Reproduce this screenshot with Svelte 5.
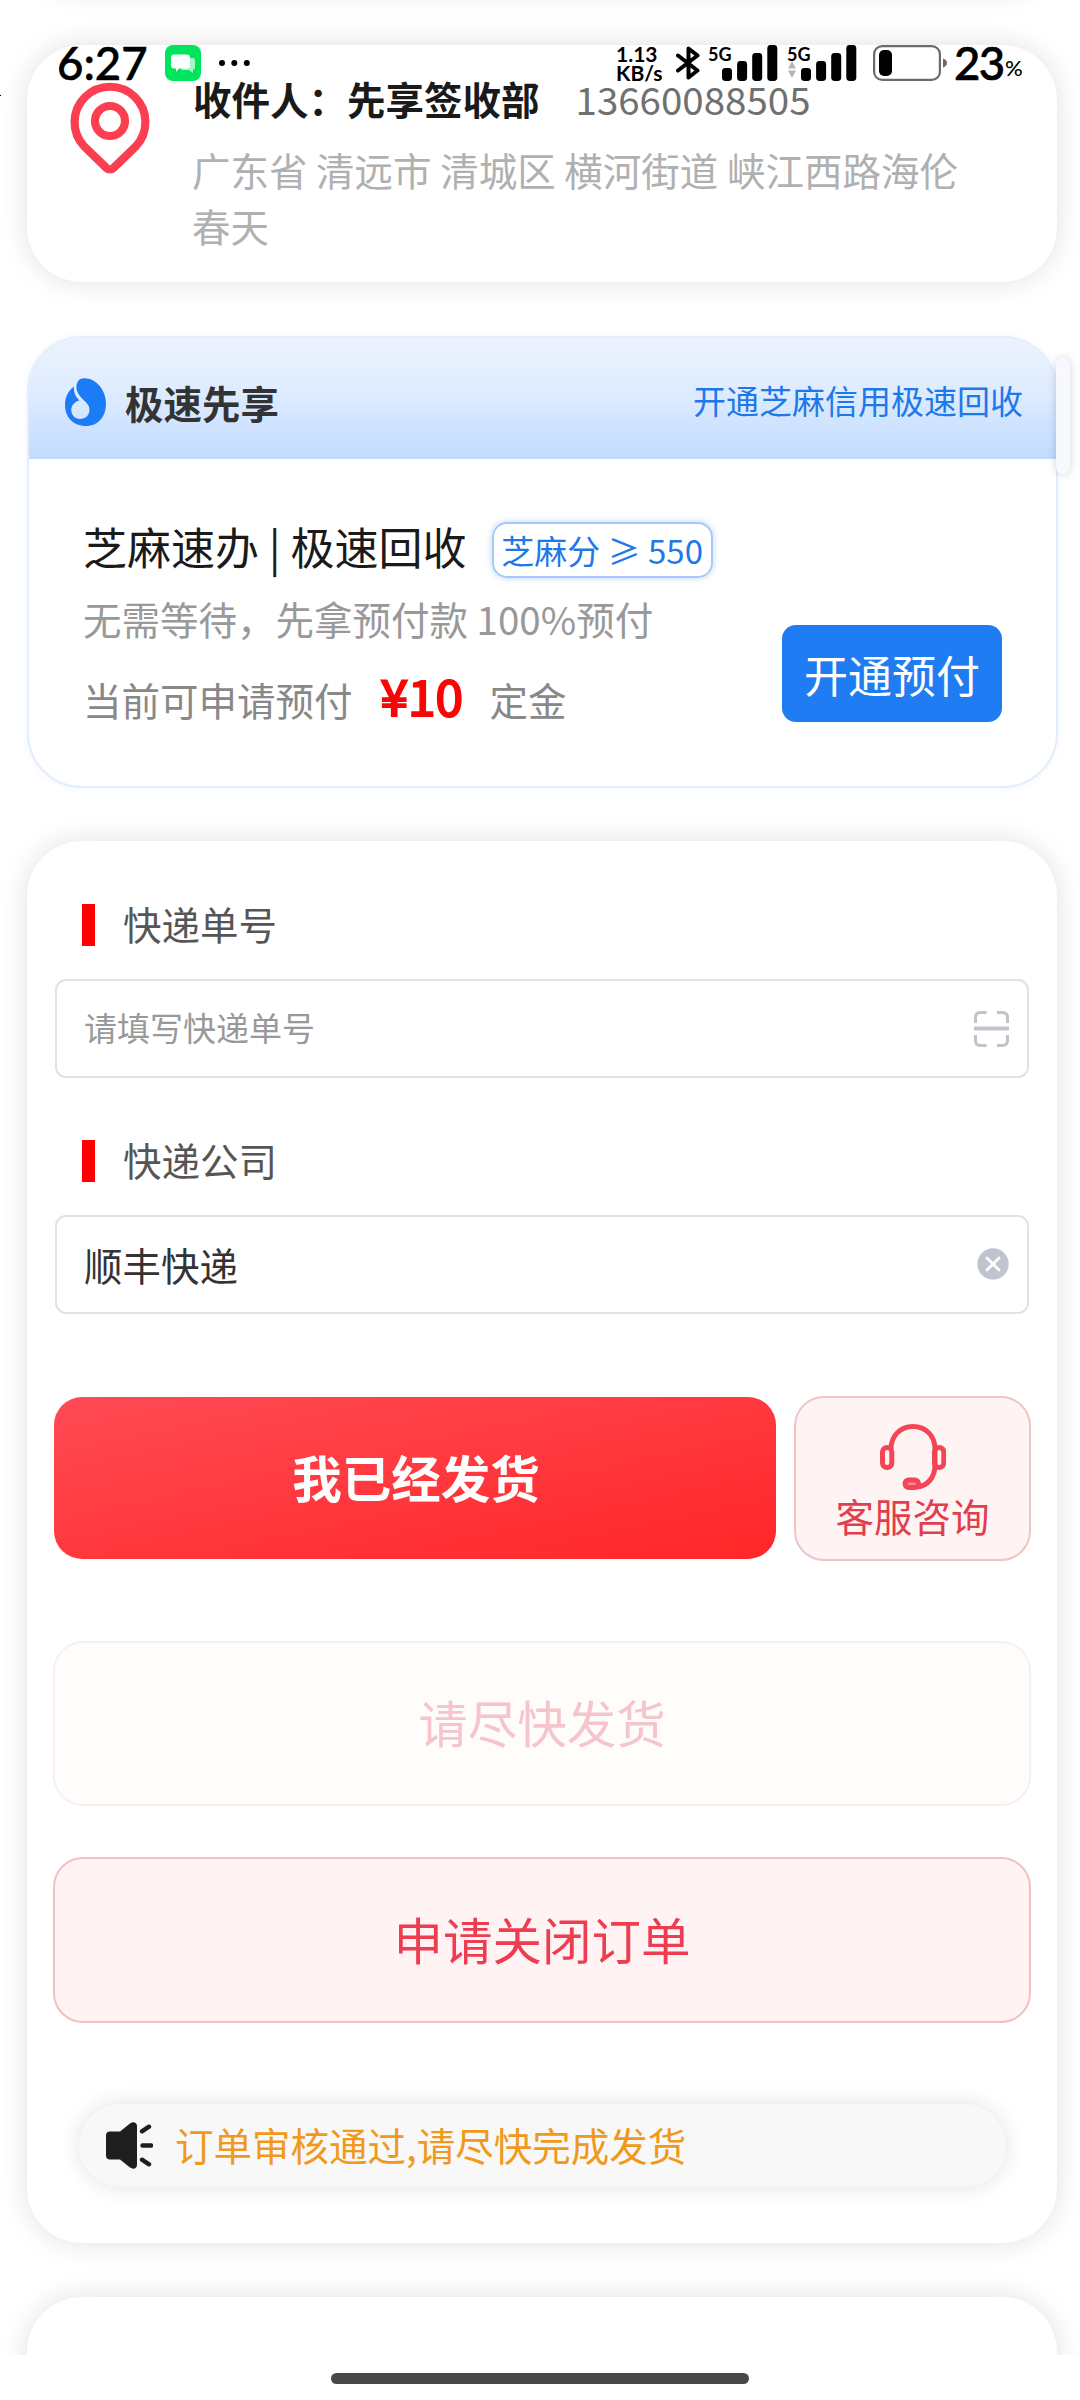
<script>
  const bars = [13, 20, 28, 36];
</script>

{#snippet signal()}
  <svg class="bars" width="56" height="36" viewBox="0 0 56 36">
    {#each bars as h, i}
      <rect x={i * 15.1} y={36 - h} width="10" height={h} rx="3.4" fill="#000" />
    {/each}
  </svg>
{/snippet}

<div class="screen">
  <main class="content">
    <section class="card previous"></section>

    <section class="card address">
      <svg class="pin" width="80" height="93" viewBox="0 0 80 93" fill="none" stroke="#fb3f51" stroke-width="8.2" stroke-linejoin="round">
        <path d="M14.3 65.5A35.4 35.4 0 1 1 65.7 65.5L43.2 87.2A4.6 4.6 0 0 1 36.8 87.2Z" />
        <circle cx="40" cy="40" r="15" />
      </svg>
      <div class="address-text">
        <div class="recipient"><b>收件人：先享签收部</b><span>13660088505</span></div>
        <p>广东省 清远市 清城区 横河街道 峡江西路海伦春天</p>
      </div>
    </section>

    <section class="card express">
      <header>
        <svg width="41" height="48" viewBox="0 0 41 48">
          <path d="M17 .6C28-1.800 41 10 41 25.500C41 39 33 48 21 48C8 48 0 39 0 27C0 19 3 13.500 9 8.600C8.500 14 10 18.500 14.500 22.300C9.500 24 6.300 27.500 6.300 32C6.300 37 10 41 15 41C20.500 41 24.500 37 24.500 32C24.500 27 21 24.500 17.800 21.300C12.500 16 10 11 12 5.500C13 2.800 14.600 1 17 .6Z" fill="#1c7cf5" />
        </svg>
        <h2>极速先享</h2>
        <a href="#open">开通芝麻信用极速回收</a>
      </header>
      <div class="express-body">
        <div class="offer">
          <div class="offer-title"><span>芝麻速办 | 极速回收</span><i lang="zh-CN">芝麻分 ≥ 550</i></div>
          <div class="offer-note">无需等待，先拿预付款 100%预付</div>
          <div class="offer-price"><span>当前可申请预付</span><b>¥10</b><span>定金</span></div>
        </div>
        <button class="prepay">开通预付</button>
      </div>
    </section>

    <section class="card form">
      <div class="label"><span>快递单号</span></div>
      <div class="field placeholder">
        <span>请填写快递单号</span>
        <svg width="35" height="36" viewBox="0 0 35 36" fill="none" stroke="#c3c3c5" stroke-width="3">
          <path d="M1.500 12V6.500Q1.500 1.500 6.500 1.500H12.500M23 1.500H28.500Q33.500 1.500 33.500 6.500V12M1.500 24V29.500Q1.500 34.500 6.500 34.500H12.500M23 34.500H28.500Q33.500 34.500 33.500 29.500V24" />
          <path d="M0 17.500H35" stroke="#c0c4cc" stroke-width="4" />
        </svg>
      </div>
      <div class="label second"><span>快递公司</span></div>
      <div class="field">
        <span>顺丰快递</span>
        <svg class="clear" width="32" height="32" viewBox="0 0 32 32">
          <circle cx="16" cy="16" r="15.700" fill="#c0c4cf" />
          <path d="M10 10L22 22M22 10L10 22" stroke="#fff" stroke-width="2.800" stroke-linecap="round" />
        </svg>
      </div>

      <div class="actions">
        <button class="primary">我已经发货</button>
        <button class="service">
          <svg width="66" height="66" viewBox="0 0 66 66" fill="none" stroke="#f34555" stroke-width="5">
            <path d="M11 25C11 12 20 2.500 33 2.500C46 2.500 55 12 55 25V41C55 54 47 62 37 63" />
            <rect x="2.500" y="23.500" width="9.300" height="20" rx="4.600" />
            <rect x="54.500" y="23.500" width="9.300" height="20" rx="4.600" />
            <rect x="25" y="56" width="13.500" height="7.500" rx="3.700" fill="#f34555" fill-opacity=".6" />
          </svg>
          <span>客服咨询</span>
        </button>
      </div>
      <button class="wide disabled">请尽快发货</button>
      <button class="wide close">申请关闭订单</button>

      <div class="notice">
        <svg width="47" height="47" viewBox="0 0 47 47">
          <path d="M4 9.500H14L24 1.500C27-.8 31 .5 31 4V43C31 46.500 27 47.800 24 45.500L14 37.500H4Q0 37.500 0 33.500V13.500Q0 9.500 4 9.500Z" fill="#1e1e1f" />
          <path d="M36 9.300L43 4.700M36.500 23.500H45M36 37.700L43 42.300" stroke="#1e1e1f" stroke-width="4.400" stroke-linecap="round" />
        </svg>
        <span>订单审核通过,请尽快完成发货</span>
      </div>
    </section>

    <section class="card next"></section>
  </main>

  <footer class="nav"><span></span></footer>

  <div class="side-handle"></div>
  <div class="edge-mark"></div>

  <div class="status">
    <span class="time">6:27</span>
    <svg class="chat" width="36" height="36" viewBox="0 0 36 36">
      <rect width="36" height="36" rx="8" fill="#00e55d" />
      <path d="M22 13H27.500Q30 13 30 15.500V22Q30 24.500 28 24.600V28L24 25H16Z" fill="#a5f5c5" />
      <path d="M9 9.500H22Q25 9.500 25 12.500V20.500Q25 23.500 22 23.500H14L11 27V23.500H9Q6 23.500 6 20.500V12.500Q6 9.500 9 9.500Z" fill="#fff" />
    </svg>
    <svg class="more" width="31" height="6" viewBox="0 0 31 6"><circle cx="3" cy="3" r="3" /><circle cx="15.300" cy="3" r="3" /><circle cx="27.800" cy="3" r="3" /></svg>
    <span class="speed"><span>1.13</span><span>KB/s</span></span>
    <svg class="bluetooth" width="24" height="34" viewBox="0 0 24 34" fill="none" stroke="#000" stroke-width="4" stroke-linecap="round" stroke-linejoin="round">
      <path d="M2 9.500L21.500 24.500L12.500 31.500V2.500L21.500 9.500L2 24.500" />
    </svg>
    <div class="sim"><span>5G</span>{@render signal()}</div>
    <div class="sim two">
      <span>5G</span>
      <svg class="arrows" width="8" height="17" viewBox="0 0 8 17"><path d="M4 0L8 7.500H0ZM4 17L8 9.500H0Z" fill="#b5b5b5" /></svg>
      {@render signal()}
    </div>
    <svg class="battery" width="75" height="36" viewBox="0 0 75 36">
      <rect x="1.100" y="1.100" width="65.800" height="33.800" rx="8" fill="none" stroke="#6b6b6b" stroke-width="2.200" />
      <rect x="6" y="5" width="13" height="26" rx="5" />
      <path d="M70 13.500Q74 15 74 18T70 22.500Z" fill="#6b6b6b" />
    </svg>
    <span class="level">23</span><span class="percent">%</span>
  </div>
</div>

<style>
  :global(body) {
    background: #fff;
  }
  .screen {
    position: relative;
    width: 1080px;
    height: 2400px;
    overflow: hidden;
    background: #fff;
    font-family: "Noto Sans CJK SC", sans-serif;
    font-size: 38.5px;
    line-height: 56px;
  }
  .screen * {
    box-sizing: border-box;
  }
  button {
    border: 0;
    margin: 0;
    padding: 0;
    font: inherit;
  }
  .content {
    height: 2355px;
    overflow: hidden;
    display: flex;
    flex-direction: column;
    gap: 54px;
    padding: 0 23px 0 27px;
  }
  .card {
    flex: none;
    border-radius: 55px;
    background: #fff;
    box-shadow: 0 0 28px rgba(0, 0, 0, 0.12);
  }
  .previous {
    height: 150px;
    margin-top: -159px;
  }
  .next {
    height: 150px;
  }

  .address {
    height: 237px;
    display: flex;
    align-items: flex-start;
    padding: 25px 0 0 43px;
  }
  .pin {
    flex: none;
    margin-top: 11px;
  }
  .address-text {
    margin-left: 42px;
    width: 780px;
  }
  .recipient {
    display: flex;
    padding-left: 1px;
    color: #1a1a1a;
  }
  .recipient span {
    margin-left: 36px;
    color: #707070;
  }
  .address p {
    margin: 15px 0 0;
    color: #b0b0b0;
  }

  .express {
    width: 1031px;
    height: 452px;
    margin-bottom: -1px;
    border: 2px solid #e3edfb;
    box-shadow: 0 0 6px rgba(60, 130, 240, 0.08);
    overflow: hidden;
  }
  .express header {
    height: 121px;
    display: flex;
    align-items: center;
    padding: 7px 33px 0 36px;
    background: linear-gradient(#ecf2fe, #deecff 45%, #c1dbff);
  }
  h2 {
    margin: -1px 0 0 19px;
    font-size: 38.5px;
    font-weight: 700;
    color: #333;
  }
  header a {
    margin: -4px 0 0 auto;
    font-size: 33px;
    color: #1f78e8;
    text-decoration: none;
  }
  .express-body {
    display: flex;
    justify-content: space-between;
    align-items: flex-start;
    padding: 63px 54px 0 54px;
  }
  .offer-title {
    display: flex;
    align-items: center;
    height: 56px;
    font-size: 44px;
    color: #1a1a1a;
  }
  .offer-title span {
    margin-top: -8px;
  }
  .offer-title i {
    display: flex;
    align-items: center;
    justify-content: center;
    width: 221px;
    height: 56px;
    margin-left: 25px;
    border: 2px solid #a5c9f8;
    border-radius: 15px;
    box-shadow: 0 0 6px rgba(60, 130, 240, 0.35);
    font-size: 33px;
    font-style: normal;
    color: #1f78e8;
    white-space: nowrap;
  }
  .offer-note {
    margin-top: 12px;
    color: #999;
  }
  .offer-price {
    display: flex;
    align-items: baseline;
    margin-top: 21px;
    color: #888;
  }
  .offer-price b {
    width: 109px;
    margin: 0 0 0 28px;
    font-size: 49.5px;
    font-weight: 400;
    -webkit-text-stroke: 2.2px #fa0505;
    color: #fa0505;
  }
  .prepay {
    width: 220px;
    height: 97px;
    margin-top: 103px;
    border-radius: 14px;
    background: #207cf3;
    font-size: 44px;
    color: #fff;
  }

  .form {
    height: 1402px;
    padding: 56px 26px 0;
  }
  .label {
    display: flex;
    align-items: center;
    height: 56px;
    margin-left: 29px;
    color: #555;
  }
  .label::before {
    content: "";
    width: 13px;
    height: 42px;
    margin-right: 28px;
    background: #fe0000;
  }
  .label span {
    padding-bottom: 5px;
  }
  .second {
    margin-top: 55px;
  }
  .field {
    display: flex;
    align-items: center;
    justify-content: space-between;
    height: 99px;
    margin: 26px 2px 0;
    padding: 0 18px 0 27px;
    border: 2px solid #e2e2e3;
    border-radius: 11px;
    color: #333;
  }
  .field span {
    padding-bottom: 2px;
  }
  .placeholder {
    font-size: 33px;
    color: #999;
  }
  .placeholder span {
    padding-bottom: 3px;
  }
  .clear {
    margin-bottom: 2px;
  }
  .actions {
    display: flex;
    gap: 18px;
    height: 165px;
    margin-top: 82px;
  }
  .primary {
    width: 722px;
    margin: 1px 0 2px 1px;
    padding: 0 0 3px 2px;
    border-radius: 28px;
    background: linear-gradient(168deg, #ff4b54, #ff2628);
    font-size: 49.5px;
    font-weight: 700;
    color: #fff;
  }
  .service {
    width: 237px;
    display: flex;
    flex-direction: column;
    align-items: center;
    padding-top: 26px;
    border: 2px solid #f1c3c7;
    border-radius: 30px;
    background: #fff4f4;
    color: #e23e4e;
  }
  .service span {
    margin-top: -3px;
  }
  .wide {
    display: block;
    width: 978px;
    border-radius: 30px;
    font-size: 49.5px;
  }
  .disabled {
    height: 165px;
    margin-top: 80px;
    padding-bottom: 3px;
    border: 2px solid #f8f0ef;
    background: #fffdfc;
    color: #f6c5cc;
  }
  .close {
    height: 166px;
    margin-top: 51px;
    padding-bottom: 2px;
    border: 2px solid #f3bfc3;
    background: #fff4f3;
    color: #ee3c50;
  }
  .notice {
    display: flex;
    align-items: center;
    height: 83px;
    margin: 81px 25px 0 26px;
    padding-left: 27px;
    border-radius: 42px;
    background: #f8f8f8;
    box-shadow: 0 0 22px rgba(0, 0, 0, 0.12);
    color: #f0991b;
  }
  .notice span {
    margin-left: 22px;
    padding-bottom: 4px;
  }

  .nav {
    display: flex;
    justify-content: center;
    height: 45px;
    padding-top: 18px;
    background: #fff;
  }
  .nav span {
    width: 418px;
    height: 11px;
    border-radius: 6px;
    background: #484848;
  }

  .side-handle {
    position: absolute;
    left: 1056px;
    top: 358px;
    width: 14px;
    height: 116px;
    border-radius: 7px;
    background: rgba(246, 248, 255, 0.9);
    box-shadow: 0 0 8px rgba(0, 0, 40, 0.18);
  }
  .edge-mark {
    position: absolute;
    left: 0;
    top: 95px;
    width: 1px;
    height: 1px;
    background: #000;
  }

  .status {
    position: absolute;
    left: 0;
    top: 45px;
    width: 1080px;
    height: 36px;
    display: flex;
    align-items: center;
    padding-left: 57px;
    font-family: Lato, sans-serif;
    font-weight: 500;
    line-height: 36px;
    color: #000;
  }
  .status > * {
    flex: none;
  }
  .time {
    width: 108px;
    font-size: 45.5px;
    -webkit-text-stroke: 0.6px #000;
  }
  .more {
    margin-left: 18px;
  }
  .speed {
    display: flex;
    flex-direction: column;
    width: 60px;
    margin-left: 366px;
    font-size: 21px;
    font-weight: 700;
    line-height: 19px;
  }
  .sim {
    position: relative;
    display: flex;
    width: 70px;
    height: 36px;
    margin-left: 8px;
    padding-left: 14px;
  }
  .sim.two {
    margin-left: 9px;
  }
  .sim span {
    position: absolute;
    left: 0;
    top: 0;
    font-size: 18px;
    font-weight: 700;
    line-height: 18px;
  }
  .arrows {
    position: absolute;
    left: 1px;
    top: 16px;
  }
  .battery {
    margin-left: 16px;
  }
  .level {
    width: 51px;
    margin-left: 6px;
    font-size: 45.5px;
    letter-spacing: -1.6px;
    -webkit-text-stroke: 0.7px #000;
  }
  .percent {
    padding-top: 10px;
    font-size: 22px;
  }
</style>
